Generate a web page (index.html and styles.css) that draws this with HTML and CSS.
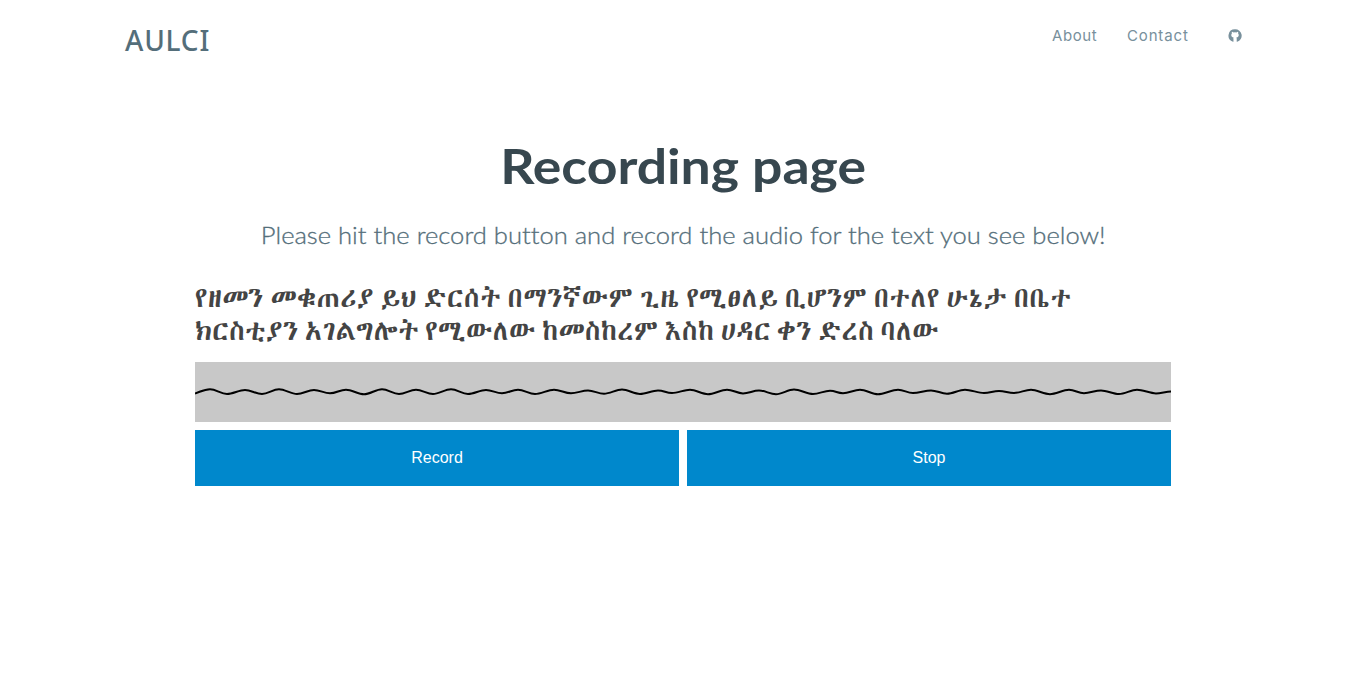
FILE: index.html
```
<!DOCTYPE html>
<html lang="en">
<head>
<meta charset="utf-8">
<title>AULCI</title>
<link rel="stylesheet" href="styles.css">
</head>
<body>
<header class="header">
  <a class="brand">AULCI</a>
  <nav class="nav">
    <a class="nav-link about">About</a>
    <a class="nav-link contact">Contact</a>
    <a class="github" aria-label="GitHub"><svg viewBox="0 0 16 16"><path d="M8 .2A8 8 0 0 0 5.500 15.800c.4.1.6-.2.6-.5v-3c-.3-.9 0-1.400.3-1.700C4.500 10.400 3.400 9.500 3.400 7.500c0-.8.3-1.500.8-2-.2-.5-.3-1.200.1-2 .7 0 1.400.3 2 .8a7 7 0 0 1 3.400 0c.6-.5 1.300-.8 2-.8.4.8.3 1.500.1 2 .5.5.8 1.200.8 2 0 2-1.100 2.900-3 3.100.3.3.5.800.5 1.700v3c0 .3.2.6.6.5A8 8 0 0 0 8 .2Z"/></svg></a>
  </nav>
</header>
<main class="main">
  <h1 class="title"><span>Recording page</span></h1>
  <p class="lead"><span>Please hit the record button and record the audio for the text you see below!</span></p>
  <p class="passage" lang="am"><span class="line first">የዘመን መቁጠሪያ ይህ ድርሰት በማንኛውም ጊዜ የሚፀለይ ቢሆንም በተለየ ሁኔታ በቤተ</span><span class="line second">ክርስቲያን አገልግሎት የሚውለው ከመስከረም እስከ ሀዳር ቀን ድረስ ባለው</span></p>
  <svg class="wave" viewBox="0 0 976 60"><path d="M0 31.500C5 30 9 27.200 15 27.200S26 32 32 32 44 28 50 28 61 32 67 32 78 27.200 84 27.200 96 32 102 32 113 28 119 28 129 31.300 135 31.300 145 27.700 151 27.700 163 32.300 169 32.300 181 27.200 187 27.200 198 32 204 32 215 27.800 221 27.800 232 32 238 32 250 27.200 256 27.200 267 32 273 32 285 28 291 28 301 31.300 307 31.300 317 27.700 323 27.700 334 32 340 32 353 27.700 359 27.700 370 31.300 376 31.300 387 28.500 393 28.500 403 31.700 409 31.700 421 27.500 427 27.500 439 31.900 445 31.900 457 28.500 463 28.500 471 31 477 31 489 27.800 495 27.800 507 32.200 513 32.200 526 27.700 532 27.700 542 31.400 548 31.400 558 28.500 564 28.500 575 32.200 581 32.200 593 27.500 599 27.500 612 32 618 32 629 28.800 635 28.800 642 31.200 648 31.200 659 27.700 665 27.700 677 32.300 683 32.300 697 27.800 703 27.800 712 31 718 31 730 28.400 736 28.400 746 31.700 752 31.700 764 27.700 770 27.700 783 31.100 789 31.100 798 29 804 29 813 31 819 31 830 27.800 836 27.800 849 32.200 855 32.200 868 27.800 874 27.800 883 31.200 889 31.200 900 28.400 906 28.400 918 32 924 32 936 27.700 942 27.700 955 31.400 961 31.400C966 31.400 971 29.500 976 29.500"/></svg>
  <div class="buttons">
    <button class="btn">Record</button>
    <button class="btn">Stop</button>
  </div>
</main>
</body>
</html>
```
FILE: styles.css
```
* { box-sizing: border-box; }
body { margin: 0; background: #fff; font-family: "Open Sans", sans-serif; }
.header { display: flex; justify-content: space-between; height: 80px; padding: 0 124px 0 125px; }
.brand { padding-top: 20px; font: 500 28px/40px "Noto Sans", sans-serif; letter-spacing: .8px; color: #546e7a; }
.nav { display: flex; align-items: flex-start; padding-top: 24px; }
.nav-link { font: 400 15px/24px Inter, sans-serif; color: #78909c; white-space: nowrap; }
.about { width: 75px; letter-spacing: .6px; }
.contact { width: 101px; letter-spacing: .85px; }
.github { display: block; padding-top: 5px; width: 14px; }
.github svg { display: block; width: 14px; height: 13px; fill: #78909c; }
.main { width: 976px; margin: 0 auto; }
.title { margin: 58px 0 0; text-align: center; font: 700 48px/56px Lato, sans-serif; color: #37474f; white-space: nowrap; }
.title span { display: inline-block; transform: scaleX(1.115); }
.lead { margin: 23px 0 0; text-align: center; font: 300 24px/36px Lato, sans-serif; color: #546e7a; white-space: nowrap; font-variant-ligatures: none; -webkit-text-stroke: .3px #546e7a; }
.lead span { display: inline-block; transform: scaleX(1.066); }
.passage { margin: 28px 0 0; font: 300 28px/33px "Abyssinica SIL", "Noto Serif Ethiopic", FreeSerif, "Noto Sans Ethiopic", "Liberation Sans", sans-serif; color: #444; }
.line { display: block; width: 976px; white-space: nowrap; height: 33px; }
.first { letter-spacing: .6px; word-spacing: -6.4px; }
.second { letter-spacing: .46px; word-spacing: -6.7px; }
.wave { display: block; width: 976px; height: 60px; margin-top: 15px; background: #c8c8c8; }
.wave path { fill: none; stroke: #000; stroke-width: 2; }
.buttons { display: grid; grid-template-columns: 1fr 1fr; gap: 8px; margin-top: 8px; }
.btn { height: 56px; border: 0; padding: 0; background: #0088cc; color: #fff; font: 16px "Liberation Sans", Arial, sans-serif; }
```
